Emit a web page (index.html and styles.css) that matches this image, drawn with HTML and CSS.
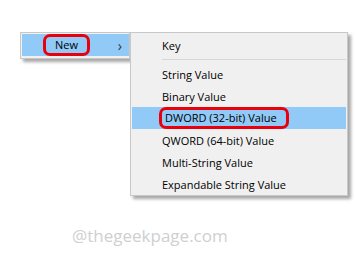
FILE: index.html
```html
<!DOCTYPE html>
<html lang="en">
<head>
  <meta charset="UTF-8">
  <title>New menu</title>
  <link rel="stylesheet" href="styles.css">
</head>
<body>
  <div class="menus">
    <!-- Parent context menu -->
    <div class="menu parent">
      <div class="item active">
        <span class="mark mark-new">New</span>
        <span class="chevron">&rsaquo;</span>
      </div>
    </div>

    <!-- Submenu -->
    <div class="menu sub">
      <div class="item">Key</div>
      <div class="sep"></div>
      <div class="item">String Value</div>
      <div class="item">Binary Value</div>
      <div class="item active"><span class="mark mark-dword">DWORD (32-bit) Value</span></div>
      <div class="item">QWORD (64-bit) Value</div>
      <div class="item">Multi-String Value</div>
      <div class="item">Expandable String Value</div>
    </div>
  </div>

  <div class="watermark">@thegeekpage.com</div>
</body>
</html>
```

FILE: styles.css
```css
body {
  margin: 0;
  background-color: #fff;
  color: #000;
  font-family: "Open Sans", "Noto Sans", sans-serif;
  font-size: 11px;
}

/* Both menus side by side */
.menus {
  display: flex;
  align-items: flex-start;
  padding: 32px 0 0 20px;
}

.menu {
  background-color: #f0f0f0;
  border: 1px solid #c8c8c8;
  box-shadow: 3px 3px 3px rgba(0, 0, 0, 0.35);
}

.item {
  height: 22px;
  display: flex;
  align-items: center;
  white-space: nowrap;
}

.item.active {
  background-color: #91c9f7;
}

/* Left menu with the "New" entry */
.parent {
  width: 107px;
  padding: 1px 0 2px 1px;
}

.parent .item {
  padding-left: 24px;
}

.chevron {
  margin-left: auto;
  margin-right: 7px;
  font-size: 14px;
  color: #333;
}

/* Submenu */
.sub {
  width: 214px;
  padding: 1px 1px 0 1px;
}

.sub .item {
  padding-left: 30px;
}

.sep {
  height: 1px;
  background-color: #d7d7d7;
  margin: 3px 0 3px 30px;
}

/* Red highlight boxes drawn over the labels */
.mark {
  display: inline-block;
  line-height: 16px;
  border-radius: 4px;
  outline: 3px solid #e8000d;
}

.mark-new {
  padding: 0 9px;
}

.mark-dword {
  padding: 0 9px 0 3px;
}

.watermark {
  margin: 28px 0 0 72px;
  font-size: 17px;
  color: #cfcfcf;
}
```
